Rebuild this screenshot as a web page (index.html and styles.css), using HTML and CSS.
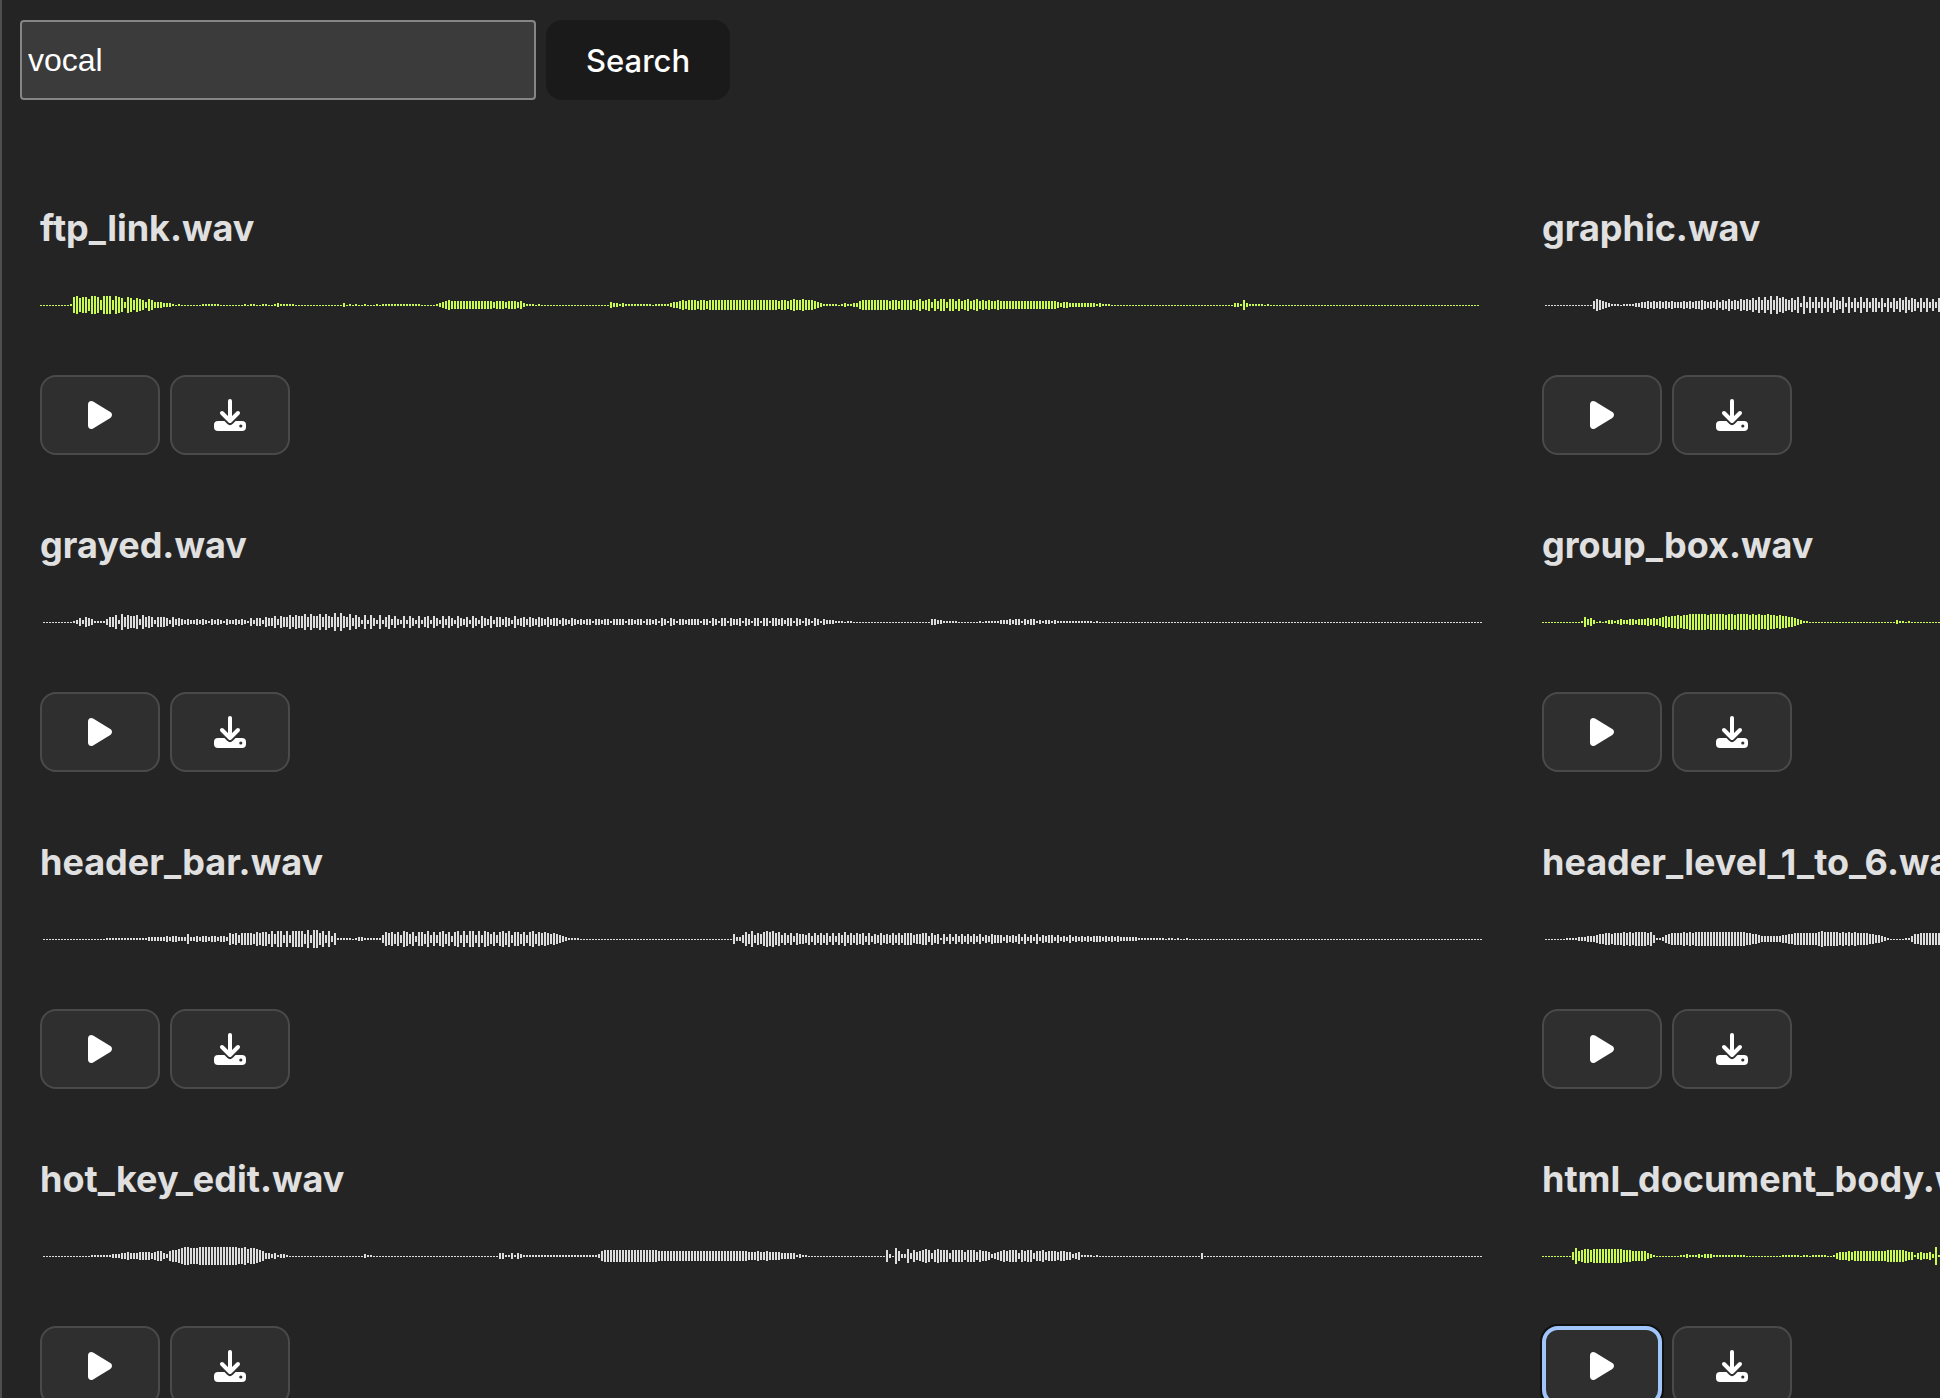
FILE: index.html
```
<!DOCTYPE html>
<html lang="en">
<head>
<meta charset="utf-8">
<title>Sample search</title>
<link rel="stylesheet" href="styles.css">
</head>
<body>
<svg class="sprite" aria-hidden="true">
  <symbol id="icon-play" viewBox="0 0 32 32">
    <path fill="currentColor" d="M4 5.4C4 2.6 6.6 1 9.100 2.500L26.300 13.100C28.500 14.500 28.500 17.500 26.300 18.900L9.100 29.500C6.600 31 4 29.400 4 26.600Z"/>
  </symbol>
  <symbol id="icon-download" viewBox="0 0 32 32">
    <rect class="tray" y="22" width="32" height="10" rx="4"/>
    <circle class="hole" cx="26.800" cy="27" r="1.600"/>
    <path class="halo" d="M8 14L16 22L24 14"/>
    <path class="arrow" d="M16 2V21M8 14L16 22L24 14"/>
  </symbol>
</svg>
<div class="panel">
  <form class="search">
    <input class="search-box" type="text" value="vocal" aria-label="Search samples">
    <button class="search-button" type="submit">Search</button>
  </form>
  <main class="results" id="results"></main>
</div>
<script src="app.js"></script>
</body>
</html>
```
FILE: styles.css
```
* { box-sizing: border-box; }

body {
  margin: 0;
  height: 100vh;
  overflow: hidden;
  background: #242424;
  color: #e0e0e0;
  font-family: Inter, "Liberation Sans", sans-serif;
}

.sprite { position: absolute; width: 0; height: 0; }

.panel {
  height: 100%;
  overflow: auto;
  scrollbar-width: none;
  border-left: 2px solid #4e4e4e;
  padding: 20px 18px;
}

.search { display: flex; gap: 10px; }

.search-box {
  width: 516px;
  height: 80px;
  padding: 2px 6px;
  border: 2px solid #858585;
  border-radius: 4px;
  background: #3b3b3b;
  color: #fff;
  font: 32px "Liberation Sans", Arial, sans-serif;
}

.search-button {
  height: 80px;
  padding: 0 40px;
  border: 0;
  border-radius: 16px;
  background: #1a1a1a;
  color: #fff;
  font: 500 31px Inter, sans-serif;
}

.results {
  display: grid;
  grid-template-columns: repeat(2, max-content);
  column-gap: 60px;
  row-gap: 63px;
  padding: 101px 20px;
}

.sample-title {
  margin: 0 0 10px;
  font-size: 36px;
  font-weight: 700;
  line-height: 54px;
}

.wave {
  display: block;
  width: 1442px;
  height: 80px;
  margin-bottom: 30px;
  overflow: visible;
  fill: #dcdcdc;
  shape-rendering: crispEdges;
}
.wave.played { fill: #c8fa50; }

.actions { display: flex; gap: 10px; }

.action {
  display: grid;
  place-items: center;
  width: 120px;
  height: 80px;
  padding: 0;
  border: 2px solid #4a4a4a;
  border-radius: 16px;
  background: #2f2f2f;
  color: #fff;
}
.action.focused {
  border: 4px solid #a0c5fb;
  box-shadow: 0 0 0 2px #101010;
}

.icon { display: block; width: 32px; height: 32px; }
.tray { fill: #fff; }
.hole { fill: #2f2f2f; }
.halo, .arrow { fill: none; stroke-linecap: round; stroke-linejoin: round; }
.halo { stroke: #2f2f2f; stroke-width: 8px; }
.arrow { stroke: #fff; stroke-width: 4px; }
```
FILE: app.js
```
// Peak levels 0-9, one per bar; "0*10" repeats a level ten times.
const samples = [
  { name: "ftp_link.wav", played: true, peaks: "0*10 1 89 7 88 6 99 8 5 999 5 9 8 7 3 8 7 5 7 6 5 3 6 5 333 222 1 0 1 0*7 1*6 0*8 1 0 11 00 11 00 1 2 1*5 0*16 2 0 1 0 1 00 1 000 1 0 1*13 0*5 12345 4*14 3 444 3 444 3 4 2 111 0 1 0*23 3 22 1 2 1*9 0 1*5 2 33 4 5 4 555 4 55 4 5*23 4 55 4 5 6 55 6 555 4 3 2 1*5 0 1 2 11 22 4 5*9 4 55 4 5555 4 5 6 4 5 6 3 6 4 66 3 66 4 6 4 5 6 4 5 6 4 5 4 5 44 5 4*19 3 2 33 2*9 1 2 111 0*41 22 1 5 2 1*5 0 1" },
  { name: "graphic.wav", peaks: "0*16 465432 111 0 1111 2233 434343434333 43434454 34353546454656575858595978657582 9383838373854 82837383737 7 3 7 2 7374758576373736 3 7" },
  { name: "grayed.wav", peaks: "0*10 1242543 1111 3 55728576 6737565255 5425343232 2323213232 1322323214 2442544636 5575766858 6685865959 6584752727 4272573632 6264262562 6426364264 3526426436 2553542634 5354354353 4424324323 2331332331 3333133233 1332314314 3133233331 3314314414 3341431441 4414434244 1431431431 3222111011 0*26 3322 1*5 0*7 1 0 1*5 2223233132331212212 1*12 0 1" },
  { name: "group_box.wav", played: true, peaks: "0*13 1 5 3 4 2 0 1 0 1 22 1 232233233343434 56566767 7 8*6 7 8*5 7 88 7 8888 7 8 7 8 77 8 7 7 6 7 66 55 4 3 2 1 1 0*29 2 1 1 0 1" },
  { name: "header_bar.wav", peaks: "0*21 1*14 2*6 323322252232332332332 6 5 6 4 6666 5 7 6 77 5 8 5 88 4 8 4 8888 5 9 4 99 6 8 4 8 3 6 1*5 0 1 22 1*6 476757487573775847 478573784848848487 574786847757478576 765654321111 0*51 5224758465787867464 6 3655463646463636474 6 4656363546454646466 6 4556636451525253535 3 5352435444243435252 4 2524344242324232323 2 333232323 2*6 1*9 0 11 0 1 00 1" },
  { name: "header_level_1_to_6.wav", peaks: "0*7 1*4 2223 3345 5 6656667676777767 4 1124 5 66667676 7*17 665 5 4 3*7 4455 6*8 7 8 7*5 67676766 66554432 1 0*5 11 355 6*8" },
  { name: "hot_key_edit.wav", peaks: "0*16 1*7 222 33 4 333 4444 3 4 55 32 56678 99 888 9*13 88 9 7 88 765 33 2 3 1 22 1 0*25 2 11 0*42 33 11 3 1 3 2 1*25 2 5 6*18 5*30 444 5 44 5 4444 3*5 1 2 11 0*26 6 2 0 8 5 22 7 3 6 4 5 6763676663 6666 4 666 4 6554 2345 6566636566355 6 4 555 4 55 44 2 3 4 1111 0 1 0*34 3" },
  { name: "html_document_body.wav", played: true, focused: true, peaks: "0*10 4856776 7*10 666 5*5 3 2 1 0*8 11 2 111 2 1 222 1*11 0*12 1*6 0 11 0 1*5 00 1 3 444 5 4 5*11 6*6 5 44 1 3 4 33 4 2 9 1" }
];

const BAR_COUNT = 480;

function expand(peaks) {
  const levels = peaks.split(" ").flatMap(token => {
    const [digits, times] = token.split("*");
    return times ? Array(Number(times)).fill(Number(digits)) : [...digits].map(Number);
  });
  while (levels.length < BAR_COUNT) levels.push(0);
  return levels;
}

function wavePath(sample) {
  const start = sample.played ? 0 : 3;
  return expand(sample.peaks).map((level, i) => {
    const height = level ? level * 2 : 1;
    return `M${start + i * 3} ${40 - level}h2v${height}h-2z`;
  }).join("");
}

document.getElementById("results").innerHTML = samples.map(sample => `
  <article class="sample">
    <h3 class="sample-title">${sample.name}</h3>
    <svg class="wave${sample.played ? " played" : ""}" aria-hidden="true"><path d="${wavePath(sample)}"/></svg>
    <div class="actions">
      <button class="action${sample.focused ? " focused" : ""}" type="button" aria-label="Play ${sample.name}"><svg class="icon"><use href="#icon-play"/></svg></button>
      <button class="action" type="button" aria-label="Download ${sample.name}"><svg class="icon"><use href="#icon-download"/></svg></button>
    </div>
  </article>`).join("");
```
